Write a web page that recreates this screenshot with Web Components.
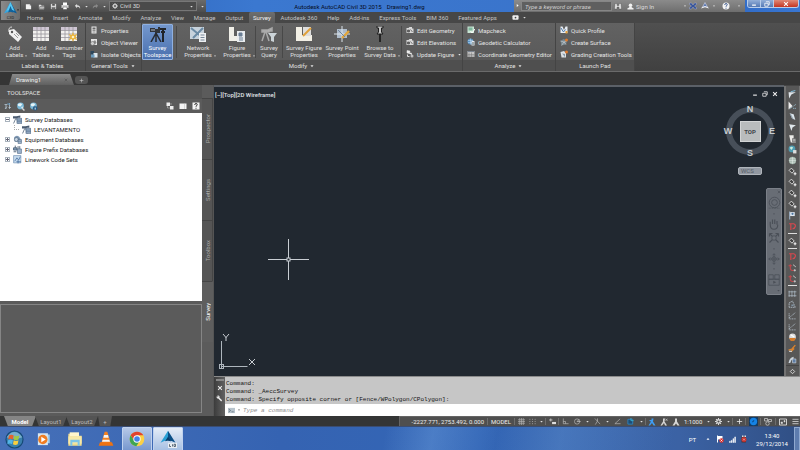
<!DOCTYPE html>
<html lang="en">
<head>
<meta charset="utf-8">
<title>Autodesk AutoCAD Civil 3D 2015</title>
<style>
html, body { margin: 0; min-height: 100%; background: #333435; }
body { font: 6px/7px Roboto, "Liberation Sans", sans-serif; color: #dcdcdc; overflow: hidden; }
</style>
</head>
<body>
<civil-app></civil-app>
<script>
/* Icon drawings, 16 x 16 unless listed in BOX24 */
const G = {
  caret: '<path d="M4 6h8l-4 5z" fill="currentColor"/>',
  gridTable: '<rect x="0" y="1" width="16" height="14" fill="#f2f1ee"/><path d="M0 1h16v3H0z" fill="#cfc6d4"/><path d="M4 1v14M8 1v14M12 1v14M0 4.5h16M0 8h16M0 11.5h16" stroke="#99979d" stroke-width=".8"/>',
};
const ICONS = {
  caret: G.caret,
  appA: '<path d="M8 0 0 14q4-2 8-2z" fill="#35a5e0"/><path d="M8 0l8 14q-4-2-8-2z" fill="#0c5f9d"/><path d="M8 0 3 11l5-2 5 2z" fill="#57c7f2"/><path d="M8 5 5 13l3-1 3 1z" fill="#13629a"/>',
  newf: '<path d="M2 3h9l3 3v8H2z" fill="#f2f2f2"/><path d="M11 3v3h3" fill="#999"/>',
  open: '<path d="M2 4h5l1 2h6v8H2z" fill="#e2e2e2"/><path d="M4 8h12l-3 6H2z" fill="#bbb" stroke="#444"/>',
  save: '<path d="M2 2h12v12H2z" fill="#d8d8d8"/><path d="M5 2h6v4H5zM4 9h8v5H4z" fill="#555"/><path d="M5 11h6" stroke="#fff"/>',
  print: '<path d="M4 1h8v5H4z" fill="#fff"/><path d="M1 6h14v6H1z" fill="#d2d2d2"/><path d="M4 10h8v5H4z" fill="#fff" stroke="#555"/>',
  undo: '<path d="M2 6l5-4v3q8 0 7 8-2-5-7-4v3z" fill="#ddd"/>',
  redo: '<path d="M14 6 9 2v3q-8 0-7 8 2-5 7-4v3z" fill="#8b8b8b"/>',
  gear: '<circle cx="8" cy="8" r="4" fill="none" stroke="#ddd" stroke-width="3"/><path d="M8 0v3M8 13v3M0 8h3M13 8h3M2.3 2.3l2 2M11.7 11.7l2 2M13.7 2.3l-2 2M4.3 11.7l-2 2" stroke="#ddd" stroke-width="2.4"/>',
  tag: '<path d="M2 6q-1-5 3-5" stroke="#ddd" fill="none"/><path d="M2 4l5-1 8 8-4 5-9-8z" fill="#eee"/><circle cx="5" cy="6" r="1.2" fill="#555"/><path d="M7 8l4 4M9 7l3 3" stroke="#999"/>',
  table: G.gridTable,
  renum: G.gridTable + '<path d="M12 6l1.200 3 3-1-1.500 3 1.500 3-3-1-1.200 3-1.200-3-3 1 1.500-3-1.500-3 3 1z" fill="#eab43c"/><circle cx="12" cy="11" r="1.300" fill="#fff3c2"/>',
  props: '<path d="M3 1h10v14H3z" fill="#e8e8e8"/><path d="M5 3h6v4H5z" fill="#666"/><path d="M5 9h6M5 12h6" stroke="#666" stroke-width="1.4"/>',
  viewer: '<path d="M2 2h12v12H2z" fill="#e6e6e6"/><path d="M5 9l5-5 3 5-3 4z" fill="#8a8a8a"/><circle cx="5" cy="11" r="4" fill="#cfcfcf" stroke="#555"/>',
  isolate: '<path d="M1 2h7v7H1z" fill="#2c475c"/><path d="M7 6h8v9H7z" fill="#dfe8ee"/><path d="M2 9h7v6H2z" fill="#6d9fc2"/>',
  transit: '<path d="M0 2h5v1h3V1h2v6H5V6H0z" fill="#30343a"/><path d="M6 7 1 16M6 7v9M6 7l5 9" stroke="#272b31" stroke-width="1.500"/><path d="M13 3v13M10 3h6M11 6h4" stroke="#20242a" stroke-width="2"/><path d="M1 4h4" stroke="#aeb7c7"/>',
  network: '<path d="M0 1h14v12H0z" fill="#c7d2dc"/><path d="M1 2l12 10M13 2 3 12" stroke="#6b8ba5" stroke-width="2"/><path d="M9 7h7v9H9z" fill="#eef0f2"/><path d="M10.500 9h4M10.500 11.500h4M10.500 14h4" stroke="#78889a"/>',
  figure: '<path d="M0 1h5v9h5v5H0z" fill="#f0efe8"/><path d="M8 5h8v11H8z" fill="#e9ecef"/><path d="M10 7h3v3h-3zM10 12h4M10 14h4" stroke="#6b7f95" fill="#6b7f95"/>',
  query: '<path d="M1 4h6l4-2v3H9l-1 1H1zM4 6 1 15M5 6l3 9" fill="#bbb" stroke="#a8a8a8" stroke-width="1.500"/><path d="M7 7h9l-3 4v5l-3-1v-4z" fill="#ccd4d8"/>',
  figprop: '<path d="M0 1h6v8h10v6H0z" fill="#f2efe5"/><path d="M7 1h8v9H7z" fill="#ddd"/><path d="M7 10l8-8" stroke="#e0a13a" stroke-width="2"/>',
  point: '<path d="M3 3h10v9H3z" fill="#aebccb"/><path d="M8 0v16M0 8h16" stroke="#dde5ec"/><path d="M8 12l7-7" stroke="#e4a73b" stroke-width="2.4"/><path d="M4 4l7 7" stroke="#71859c"/>',
  pin: '<path d="M5 0h6v2H9.500v4L11 8H5l1.500-2V2H5z" fill="#c4c4c4" stroke="#1f1f1f"/><path d="M8 8v8" stroke="#1d1d1d" stroke-width="1.800"/>',
  editgeo: '<path d="M1 4h4l2-2h5v3h3v9H1z" fill="#d9d9d9"/><path d="M3 8h4v4H3zM9 7l4 5" fill="#666" stroke="#555" stroke-width="1.500"/>',
  update: '<path d="M2 1l6 1-1 5-5-1zM6 6h5v4" fill="#eee" stroke="#eee"/><circle cx="12" cy="12" r="3" fill="#bbb"/><path d="M3 9v4h4" stroke="#ddd" fill="none" stroke-width="2"/>',
  mapcheck: '<path d="M1 1h13v13H1z" fill="#c9e5d4"/><path d="M3 3h8v6H3z" fill="#80b89e"/><path d="M7 10l3 4 6-8" stroke="#fff" stroke-width="2" fill="none"/>',
  geodetic: '<circle cx="7" cy="7" r="6" fill="#5b93c4"/><path d="M7 1v12M2 5h10M2 9h10" stroke="#cfe4f5"/><path d="M9 6h6v9H9z" fill="#e6eaf0"/><path d="M11 8v6M13 8v6" stroke="#566"/>',
  coord: '<path d="M1 2h14v12H1z" fill="#c6c6c6"/><path d="M1 3h14" stroke="#7b8490" stroke-width="2"/><path d="M4 5v9M1 9h14M1 12h14M9 5v9" stroke="#777"/>',
  qprofile: '<path d="M1 1h4l3 7 3-7h4v13H1z" fill="#e8edf3"/><path d="M2 4l5 8 4-5" stroke="#4d78a8" fill="none" stroke-width="2"/><path d="M11 10h4v5h-4z" fill="#e49e39"/>',
  surface: '<path d="M1 6l6-4 7 3-2 8-9 2z" fill="#7a8a92"/><path d="M1 6l7 2 6-3M8 8l-5 7M8 8l4 5" stroke="#e0e5e8"/><circle cx="13" cy="4" r="3" fill="#e07b2d"/>',
  grading: '<path d="M1 4l7-2 4 4v9H3z" fill="#dce1e5"/><path d="M4 7l6 1v6" fill="#8798a6"/><circle cx="13" cy="4" r="3" fill="#e07b2d"/>',
  bino: '<path d="M2 3h4v4h4V3h4l1 11h-5v-4H6v4H1z" fill="#e3e3e3" stroke="#444" stroke-width=".7"/>',
  user: '<circle cx="8" cy="5" r="4" fill="#f1f1f1"/><path d="M5 8h6v2l4 2v3H1v-3l4-2z" fill="#f1f1f1"/>',
  exch: '<path d="M1 2h4l3 4 3-4h4v3l-4 3 4 3v3h-4l-3-4-3 4H1v-3l4-3-4-3z" fill="#37549a" stroke="#dde" stroke-width=".6"/>',
  a360: '<path d="M8 1l5 9H3z" fill="#5a77ae" stroke="#eef"/><path d="M1 12q7-6 14 0" stroke="#fff" stroke-width="1.800" fill="none"/>',
  help: '<circle cx="8" cy="8" r="7" fill="#f3f3f3"/><path d="M5.500 6q0-3 2.500-3t2.500 2.300q0 1.700-2.500 3v1.200M8 11.500v2" fill="none" stroke="#35538a" stroke-width="1.800"/>',
  cam: '<rect x="1" y="3" width="14" height="10" rx="2" fill="#eee"/><circle cx="8" cy="8" r="2" fill="#444"/>',
  min: '<path d="M3 11h10" stroke="currentColor" stroke-width="3"/>',
  restore: '<path d="M5 2h9v8h-3M2 6h9v8H2z" fill="none" stroke="currentColor" stroke-width="2"/>',
  close: '<path d="M3 3l10 10M13 3 3 13" stroke="currentColor" stroke-width="2.800"/>',
  plus: '<path d="M8 2v12M2 8h12" stroke="currentColor" stroke-width="1.800"/>',
  ttool: '<path d="M1 5h6M4 5v9M6 9l-4 5M11 2v12M9 11h5" stroke="#b9cbd8" stroke-width="1.500"/><path d="M6 2l8 2-5 2z" fill="#5c8fb3"/>',
  globe: '<circle cx="8" cy="7" r="6" fill="#79b7d7"/><path d="M3 4q5-4 8 0l-3 4-4-1zM9 9l4-1-2 4z" fill="#e7f3f6"/><path d="M11 11l4 4" stroke="#d4d4d4" stroke-width="2.400"/>',
  globei: '<circle cx="8" cy="7" r="6" fill="#79b7d7"/><path d="M3 4q5-4 8 0l-3 4-4-1z" fill="#e7f3f6"/><circle cx="11" cy="11" r="4" fill="#265c86"/><path d="M11 8.500v1M11 10.500v3" stroke="#fff" stroke-width="1.500"/>',
  panes: '<path d="M1 1h7v7H1zM8 8h7v7H8z" fill="#eee"/><path d="M3 8v4h5M8 4h4" stroke="#ccc" fill="none"/>',
  pane: '<path d="M1 3h14v11H1z" fill="#f4f4f4"/><path d="M11 3v11" stroke="#bbb"/>',
  qbox: '<path d="M1 1h14v14H1z" fill="#f4f4f4"/><path d="M5.500 6q0-3 2.500-3t2.500 2.300q0 1.700-2.500 3v1.200M8 11.500v2" fill="none" stroke="#333" stroke-width="2"/>',
  sdb: '<path d="M0 2h6l7-1v4H9L6 6H0z" fill="#4a5b70"/><path d="M5 6 1 15M6 6l4 9" stroke="#5c6e83" stroke-width="1.500"/><path d="M7 6h9v9H7z" fill="#9cb3cd" stroke="#48617d"/><path d="M7 9h9M7 12h9" stroke="#48617d"/>',
  edb: '<path d="M2 4q4-5 9-1l2 3v6H3z" fill="#7d97b3"/><circle cx="6" cy="8" r="3.500" fill="#c7d5e3" stroke="#41566e"/><path d="M9 8h6v7H9z" fill="#a6bbd2" stroke="#47607c"/><path d="M9 11h6" stroke="#47607c"/>',
  fdb: '<path d="M1 5h6v4H1zM4 5V1M9 2v8M12 2v5M1 12h5" stroke="#41566e" stroke-width="1.500" fill="#8ca6c2"/><path d="M8 7h7v8H8z" fill="#9cb3cd" stroke="#47607c"/>',
  lcs: '<path d="M1 1h13v13H1z" fill="#c6dbee" stroke="#5e83a8"/><path d="M3 11l4-6 3 4 3-6M6 12h8M9 9v6" stroke="#41699b" fill="none" stroke-width="1.300"/>',
  wrench: '<path d="M2 2q4-2 6 1v3l6 6-2 3-7-7H3Q0 6 2 2l2 3 2-1z" fill="#eee"/>',
  prompt: '<path d="M0 2h16v12H0z" fill="#b8c4cd"/><path d="M2 5l4 3-4 3M8 11h5" stroke="#526170" fill="none" stroke-width="1.500"/>',
  gridl: '<path d="M4 0v16M8 0v16M12 0v16M0 4h16M0 8h16M0 12h16" stroke="#b9b9b9" stroke-width="1.400"/>',
  dots: '<path d="M1 3h14M1 8h14M1 13h14" stroke="#aaa" stroke-width="2" stroke-dasharray="2 4"/>',
  dyn: '<path d="M4 1v7M0 4.500h8" stroke="#ddd" stroke-width="1.600"/><path d="M7 9h9v5H7z" fill="#ddd"/>',
  ortho: '<path d="M3 1v12h12M3 8h5v5" stroke="#bbb" stroke-width="1.500" fill="none"/>',
  polar: '<circle cx="7" cy="8" r="6" fill="none" stroke="#bbb" stroke-width="1.500"/><path d="M7 8h8M7 8l5-5" stroke="#ccc" stroke-width="1.500"/>',
  iso: '<path d="M2 1l12 13M8 7 3 15M8 1v6" stroke="#bbb" stroke-width="1.500"/>',
  angle: '<path d="M14 2 2 13h13" stroke="#bbb" stroke-width="1.500" fill="none"/>',
  osnap: '<path d="M2 3h11v11H2z" fill="#1d4d74" stroke="#2d84c4" stroke-width="2"/><path d="M9 0v6h6" stroke="#39b4d3" fill="none" stroke-width="2"/>',
  annb: '<path d="M7 1h4l-1 6 5 8h-4l-3-5-4 5H1l5-8-3-1V4h4z" fill="#3f9df2"/>',
  anng: '<path d="M6 1h4l-1 6 5 8h-4l-2-5-4 5H1l5-8z" fill="#d6d6d6"/><path d="M11 2l4 3M11 5l4-3" stroke="#ccc" stroke-width="1.400"/>',
  ann: '<path d="M6 1h4v6l5 8h-4l-3-4-3 4H1l5-8z" fill="#d6d6d6"/>',
  blue: '<path d="M0 0h16v16H0z" fill="#123a63"/><circle cx="8" cy="8" r="6.500" fill="#1583e6"/><path d="M6 9l3-3" stroke="#0b4b8c" stroke-width="2"/>',
  iso2: '<path d="M1 1h6v5H1zM9 3h6v4H9z" fill="none" stroke="#ccc" stroke-width="1.500"/><circle cx="7" cy="11" r="3.500" fill="none" stroke="#ccc" stroke-width="1.500"/>',
  clean: '<path d="M1 2h14v12H1z" fill="none" stroke="#ddd" stroke-width="1.800"/><path d="M10 5h2v3h-2zM4 8h3v3H4z" fill="#ddd" stroke="#ddd"/>',
  menu: '<path d="M1 3h14M1 8h14M1 13h14" stroke="#ddd" stroke-width="1.800"/>',
  /* right-hand tool strip */
  r1: '<path d="M1 4h13l-8 4-4 7z" fill="#dfe6eb"/><path d="M5 3l8-2" stroke="#7cb4d0" stroke-width="2"/>',
  r2: '<path d="M1 1l7 8-7 6z" fill="#eee"/><path d="M3 14l11-8M9 13h6" stroke="#9dc3d4" stroke-width="1.500" stroke-dasharray="2 1"/>',
  r3: '<path d="M3 2l7 2 3 10-6-3z" fill="#dce5eb"/><path d="M4 3l5 10" stroke="#8296a4" stroke-width="1.500"/>',
  r4: '<path d="M2 2l4 12 2-6 6-4z" fill="#e1e8ec"/>',
  r5: '<path d="M2 2h8v7l4 3v3H5z" fill="#ecebe8"/><path d="M8 8h6v6H8z" fill="#a9a9a9" stroke="#555"/>',
  r6: '<circle cx="7" cy="7" r="6" fill="#4f9db2"/><path d="M3 5q4-4 6 0l-3 4z" fill="#ccecdf"/><path d="M9 9h6v6H9z" fill="#ddd"/>',
  r7: '<circle cx="8" cy="8" r="6.500" fill="#a1b5ab"/><path d="M8 2v12M2 8h12M3 5h10M3 11h10" stroke="#e5ece8"/>',
  r8: '<path d="M6 2l5 5-4 4-5-5z" fill="#444" stroke="#e4e4e4" stroke-width="1.600"/><path d="M10 12h5M12.500 9.500v5" stroke="#f2f2f2" stroke-width="2"/>',
  r9: '<path d="M3 2h9v7H3z" fill="#dfe7ef"/><path d="M3 1v14" stroke="#97abc0" stroke-width="2"/><circle cx="8" cy="5" r="2" fill="#4d76a1"/>',
  r10: '<path d="M2 3h8q4 1 3 5t-5 4M5 3v11" stroke="#d9484f" stroke-width="2" fill="none"/>',
  r11: '<path d="M4 2v7M1 5h6M4 9q0 5 6 4" stroke="#c8474c" stroke-width="1.800" fill="none"/><path d="M9 3l5 4M12 11v4M10 13h4" stroke="#ccc" stroke-width="1.600"/>',
  r12: '<path d="M2 3v11M7 3v11M12 3v11M1 5h14M1 12h14" stroke="#b6c3cf" stroke-width="1.200"/>',
  r13: '<path d="M2 13V5l6-3 5 11z" fill="none" stroke="#b6c3cf" stroke-width="1.400" stroke-dasharray="3 1"/><path d="M6 8h4v3H6z" fill="#8295a5"/>',
  r14: '<path d="M2 12 13 3M2 4v10h12" fill="none" stroke="#b6c3cf" stroke-width="1.400" stroke-dasharray="2 1"/>',
  r15: '<circle cx="8" cy="7" r="6" fill="#dcdcdc"/><path d="M2 9h12l-3 5H5z" fill="#d47b2a"/><path d="M5 3l6 4" stroke="#fff" stroke-width="2"/>',
  r16: '<path d="M1 11l6-2 6-7M5 14l6-6" stroke="#d9822e" stroke-width="2.400"/><path d="M2 13h5" stroke="#ddd" stroke-width="2"/>',
  r17: '<path d="M1 14q1-9 9-11v3Q5 8 4 14z" fill="#c9d2da"/><path d="M8 7h6v7H8z" fill="#5e7da5" stroke="#d7dfe8"/>',
  diamond: '<path d="M8 3l5 5-5 5-5-5z" fill="none" stroke="#ddd" stroke-width="2"/>',
  /* navigation bar */
  wheel: '<circle cx="8" cy="8" r="6.500" fill="none" stroke="currentColor"/><circle cx="8" cy="8" r="3.500" fill="none" stroke="currentColor"/><path d="M1 15h14" stroke="currentColor" stroke-dasharray="1 1"/>',
  hand: '<path d="M3 9V5M6 8V2M9 8V2M12 9V4M3 9q0 6 5 6t5-6" stroke="currentColor" stroke-width="1.500" fill="none"/>',
  zoomx: '<path d="M2 2l12 12M14 2 2 14M2 2h4M2 2v4M14 2h-4M14 2v4" stroke="currentColor" stroke-width="1.500"/><circle cx="8" cy="8" r="3" fill="#6b7078" stroke="currentColor"/>',
  orbit: '<path d="M8 1v14M1 8h14M6 3l2-2 2 2M6 13l2 2 2-2M3 6 1 8l2 2M13 6l2 2-2 2" stroke="currentColor" fill="none"/><circle cx="8" cy="8" r="3" fill="none" stroke="currentColor"/>',
  motion: '<path d="M1 7h14v8H1zM1 1h6v6H1zM9 1h6v6H9z" fill="none" stroke="currentColor"/><path d="M7 9l4 2-4 2z" fill="currentColor"/>',
  /* task bar */
  win: '<circle cx="12" cy="12" r="11.500" fill="#164976"/><circle cx="12" cy="12" r="10" fill="#3a80ad"/><path d="M2 9q10-13 20 0-10 4-20 0z" fill="#a4cfe0" opacity=".6"/><path d="M5 7q3-2 6 0l-1 5q-3-2-6 0z" fill="#e5622c"/><path d="M12 7q3 2 6 0l-1 5q-3 2-6 0z" fill="#9fca43"/><path d="M4 13q3-2 6 0l-1 5q-3-2-6 0z" fill="#52b5e8"/><path d="M11 13q3 2 6 0l-1 5q-3 2-6 0z" fill="#f9cf3f"/>',
  wmp: '<path d="M8 4h14v14H8z" fill="#9dcdec"/><path d="M3 2h16v19H3z" fill="#d6e6f2"/><circle cx="11" cy="12" r="7.500" fill="#ef7d22"/><path d="M8.500 7.500l7 4.500-7 4.500z" fill="#fff"/>',
  folder: '<path d="M2 4h8l2 3h10v15H2z" fill="#f0dc8c"/><path d="M4 2h14v6H4z" fill="#fff6cd"/><path d="M2 8h20v11H2z" fill="#f7e9a8"/><path d="M5 13h14v9h-3v-5H8v5H5z" fill="#7dc5e8"/>',
  vlc: '<path d="M10 1h4l5 17H5z" fill="#f58220"/><path d="M9 6h6l1 4H8zM7 13h10l1 3H6z" fill="#f4f4f4"/><path d="M3 17h18l2 5H1z" fill="#ee7212"/>',
  chrome: '<circle cx="12" cy="12" r="11" fill="#fbd045"/><path d="M12 1a11 11 0 0 1 9.500 5.500H12L7 14 2.500 6.500A11 11 0 0 1 12 1z" fill="#e0412f"/><path d="M2.500 6.500A11 11 0 0 0 11 23l5-8-4 2-5-3z" fill="#3fa552"/><circle cx="12" cy="12" r="5.500" fill="#fff"/><circle cx="12" cy="12" r="4.200" fill="#4482e8"/>',
  acad: '<path d="M12 1 2 17q5-3 10-3z" fill="#2ba0d4"/><path d="M12 1l10 16q-5-3-10-3z" fill="#0a4e85"/><path d="M12 9l-4 6 4-1 4 1z" fill="#0b3e6b"/><path d="M12 17h12v7H12z" fill="#e8edf2"/><path d="M14 19v3h2M18 19v3M20 19h2v3h-2z" stroke="#345" fill="none"/>',
  flag: '<path d="M3 1v14" stroke="#fff" stroke-width="2"/><path d="M4 2h9v7H4z" fill="#fff"/><circle cx="11" cy="11" r="4.500" fill="#d9302c"/><path d="M9 9l4 4M13 9l-4 4" stroke="#fff" stroke-width="1.500"/>',
  signal: '<path d="M1 15v-3h2v3zM5 15v-5h2v5zM9 15V6h2v9zM13 15V2h2v13z" fill="#fff" stroke="#fff"/>',
  sound: '<path d="M3 3h9v12H3z" fill="#4a3434"/><path d="M4 1h3v3H4zM9 1h3v3H9z" fill="#ddd"/><circle cx="8" cy="9" r="5" fill="#c8302c"/><path d="M6 7l4 4M10 7l-4 4" stroke="#eee"/>',
  up: '<path d="M4 10h8L8 5z" fill="#fff"/>',
};
const BOX24 = new Set(['win', 'wmp', 'folder', 'vlc', 'chrome', 'acad']);

const RESET = `
  *, *::before { box-sizing: border-box; }
  button, input, select { font: inherit; color: inherit; margin: 0; padding: 0; border: 0; background: none;
    border-radius: 0; outline: 0; appearance: none; min-width: 0; text-align: inherit; }
  button { display: flex; align-items: center; justify-content: center; white-space: nowrap; }
`;
function define(tag, render) {
  customElements.define(tag, class extends HTMLElement {
    connectedCallback() {
      if (this.shadowRoot) return;
      const t = document.createElement('template');
      t.innerHTML = render(this);
      const root = this.attachShadow({ mode: 'open' });
      root.append(t.content.cloneNode(true));
      const s = document.createElement('style');
      s.textContent = RESET;
      root.prepend(s);
    }
  });
}
const ic = (n, s = 8) => `<cad-icon name="${n}" size="${s}"></cad-icon>`;

define('cad-icon', el => {
  const n = el.getAttribute('name'), s = el.getAttribute('size') || 8, b = BOX24.has(n) ? 24 : 16;
  return `<style>:host{display:block;flex:none}svg{display:block}</style>
    <svg width="${s}" height="${s}" viewBox="0 0 ${b} ${b}" fill="none" aria-hidden="true">${ICONS[n] || ''}</svg>`;
});

define('icon-button', el => `
  <style>:host{display:flex;flex:none}button{width:100%;height:100%}</style>
  <button aria-label="${el.getAttribute('label') || el.getAttribute('name')}">${ic(el.getAttribute('name'), el.getAttribute('size') || 8)}</button>`);

define('app-button', () => `
  <style>:host{display:block;height:21px;width:21px}
  button{width:100%;height:100%;flex-direction:column;background:linear-gradient(90deg,#8a8a8a,#6c6c6c);border:1px solid #474747;border-radius:0 0 3px 0;position:relative}
  cad-icon[name=caret]{position:absolute;right:0;top:7px;color:#111}
  span{font-size:4px;line-height:5px;color:#222}</style>
  <button aria-label="Application menu">${ic('appA', 13)}<span>C3D</span>${ic('caret', 4)}</button>`);

define('title-bar', () => `
  <style>
  :host{display:flex;height:12px;background:linear-gradient(90deg,#2a5fb4,#3b78d0 30%,#3a74cb 70%,#2a62bd 85%,#3977d3)}
  .quick{display:flex;align-items:center;flex:none;width:185px;background:linear-gradient(#6b6b6b,#4d4d4d)}
  .quick icon-button{width:12px;height:12px}
  .quick .f{width:14px}
  .quick .c{width:6px;color:#ddd}
  .ws{display:flex;align-items:center;gap:2px;width:89px;height:10px;margin-left:2px;padding:0 2px;background:#4a4a4a;border:1px solid #777}
  select{flex:1;line-height:8px;height:8px}
  .quick .cap{width:8px;margin-left:1px}
  .name{flex:1;display:flex;justify-content:center;align-items:center;color:#050c1c;gap:5px;padding-right:1px}
  .info{display:flex;align-items:center;width:231px;flex:none;background:linear-gradient(#8b8b8b,#6e6e6e)}
  .info .a{width:7px;height:12px;color:#fff;transform:rotate(-90deg)}
  input{width:91px;height:10px;padding-left:3px;background:#5f5f5f;border:1px solid #868686;font-style:italic}
  input::placeholder{color:#cfcfcf;opacity:1}
  .info icon-button{width:12px;height:12px;color:#eee}
  .info .n{width:5px}
  .info .h{width:20px}
  .sign{width:46px;justify-content:flex-start}
  .win{display:flex;flex:none;width:52px;height:8px;margin:0 1px 0 2px;color:#fff;border:1px solid #b8cdea;border-top:0;border-radius:0 0 3px 3px;overflow:hidden}
  .win icon-button{flex:1;background:linear-gradient(#93afd8,#5479b5);border-right:1px solid #b8cdea}
  .win icon-button:last-child{flex:2;background:linear-gradient(#e08a78,#c43521);border:0}
  </style>
  <div class="quick">
    <icon-button class="f" name="newf" size="7"></icon-button><icon-button name="open" size="7"></icon-button>
    <icon-button name="save" size="7"></icon-button><icon-button name="print" size="8"></icon-button>
    <icon-button name="undo" size="7"></icon-button><icon-button class="c" name="caret" size="5" label="Undo list"></icon-button>
    <icon-button name="redo" size="7"></icon-button><icon-button class="c" name="caret" size="5" label="Redo list"></icon-button>
    <label class="ws">${ic('gear', 6)}<select aria-label="Workspace"><option>Civil 3D</option></select>${ic('caret', 5)}</label>
    <icon-button name="caret" size="5" class="cap" label="Customize"></icon-button>
  </div>
  <div class="name"><span>Autodesk AutoCAD Civil 3D 2015</span><span>Drawing1.dwg</span></div>
  <div class="info">
    <icon-button class="a" name="caret" size="6" label="Collapse search"></icon-button>
    <input type="search" aria-label="Search" placeholder="Type a keyword or phrase">
    <icon-button name="bino"></icon-button><icon-button name="user" size="7"></icon-button>
    <button class="sign">Sign In</button>
    <icon-button class="n" name="caret" size="4" label="Account"></icon-button><icon-button name="exch"></icon-button>
    <icon-button name="a360"></icon-button><icon-button class="n" name="caret" size="4" label="Apps"></icon-button>
    <icon-button class="h" name="help"></icon-button><icon-button class="n" name="caret" size="4" label="Help menu"></icon-button>
  </div>
  <div class="win"><icon-button name="min" size="6"></icon-button><icon-button name="restore" size="6"></icon-button><icon-button name="close" size="6"></icon-button></div>`);

define('ribbon-tabs', el => `
  <style>:host{display:flex;align-items:stretch;height:11px;background:#474747;color:#c4c4c4;padding-left:2px}
  nav{display:flex;justify-content:space-between;flex:0 0 478px}
  button{padding:0 4px}
  button[aria-selected=true]{background:linear-gradient(#6e6e6e,#5c5c5c);color:#f2f2f2;border-radius:2px 2px 0 0}
  icon-button{width:12px;margin-left:8px}.c{width:6px;margin:0;color:#ddd}</style>
  <nav role="tablist">${el.getAttribute('tabs').split(',').map(t => `<button role="tab" aria-selected="${t === 'Survey'}">${t}</button>`).join('')}</nav>
  <icon-button name="cam" size="7" label="Minimize ribbon"></icon-button><icon-button class="c" name="caret" size="5" label="Ribbon options"></icon-button>`);

define('ribbon-panel', el => `
  <style>:host{display:flex;flex-direction:column;flex:none;width:var(--w);border-right:1px solid #444}
  .body{flex:1;display:flex;background:linear-gradient(#626262,#5a5a5a);padding-top:1px}
  .cap{display:flex;align-items:center;justify-content:center;gap:2px;height:11px;width:100%;background:#4f4f4f;color:#e2e2e2}</style>
  <div class="body"><slot></slot></div>
  ${el.hasAttribute('menu') ? `<button class="cap">${el.getAttribute('caption')}${ic('caret', 6)}</button>` : `<div class="cap">${el.getAttribute('caption')}</div>`}`);

define('big-tool', el => `
  <style>:host{display:flex;flex:none;width:var(--w);height:36px}
  button{width:100%;flex-direction:column;justify-content:flex-start;padding-top:2px;gap:2px;color:#e0e0e0;text-align:center}
  :host([active]) button{background:linear-gradient(#7397cd,#4a70ae);border:1px solid #8fb0e0;padding-top:1px;border-radius:1px;color:#fff}
  span{position:relative;line-height:7px}
  span cad-icon{position:absolute;left:100%;bottom:0;margin-left:1px}</style>
  <button>${ic(el.getAttribute('icon'), 16)}<span>${el.getAttribute('text').replace('|', '<br>')}${el.hasAttribute('menu') ? ic('caret', 4) : ''}</span></button>`);

define('tool-list', el => `
  <style>:host{display:flex;flex-direction:column;flex:none;padding-left:4px}
  button{height:12px;gap:3px;justify-content:flex-start;color:#e4e4e4}</style>
  ${el.getAttribute('items').split(',').map(i => { const [n, t, m] = i.split(':'); return `<button>${ic(n, 8)}${t}${m ? ic('caret', 5) : ''}</button>`; }).join('')}`);

define('ribbon-bar', () => `
  <style>:host{display:flex;height:49px;background:linear-gradient(#505050,#404040);border-bottom:1px solid #6a6a6a}
  i{width:1px;flex:none;background:#484848;margin:2px 0}
  .r{margin-left:3px}</style>
  <ribbon-panel style="--w:86px" caption="Labels &amp; Tables">
    <big-tool style="--w:29px" icon="tag" text="Add|Labels" menu></big-tool><big-tool style="--w:24px" icon="table" text="Add|Tables" menu></big-tool><big-tool style="--w:32px" icon="renum" text="Renumber|Tags"></big-tool>
  </ribbon-panel>
  <ribbon-panel style="--w:56px" caption="General Tools" menu><tool-list items="props:Properties,viewer:Object Viewer,isolate:Isolate Objects"></tool-list></ribbon-panel>
  <ribbon-panel style="--w:321px" caption="Modify" menu>
    <big-tool style="--w:31px" icon="transit" text="Survey|Toolspace" active></big-tool><i class="r"></i>
    <big-tool style="--w:42px" icon="network" text="Network|Properties" menu></big-tool><big-tool style="--w:36px" icon="figure" text="Figure|Properties" menu></big-tool><i></i>
    <big-tool style="--w:26px" icon="query" text="Survey|Query"></big-tool><i></i>
    <big-tool style="--w:42px" icon="figprop" text="Survey Figure|Properties"></big-tool><big-tool style="--w:34px" icon="point" text="Survey Point|Properties"></big-tool><big-tool style="--w:42px" icon="pin" text="Browse to|Survey Data" menu></big-tool><i></i>
    <tool-list items="editgeo:Edit Geometry,editgeo:Edit Elevations,update:Update Figure:m"></tool-list>
  </ribbon-panel>
  <ribbon-panel style="--w:93px" caption="Analyze" menu><tool-list items="mapcheck:Mapcheck,geodetic:Geodetic Calculator,coord:Coordinate Geometry Editor"></tool-list></ribbon-panel>
  <ribbon-panel style="--w:79px" caption="Launch Pad"><tool-list items="qprofile:Quick Profile,surface:Create Surface,grading:Grading Creation Tools"></tool-list></ribbon-panel>`);

define('file-tabs', () => `
  <style>:host{display:flex;height:13px;background:#353535;padding:2px 0 0 9px}
  .t{display:flex;align-items:center;width:65px;background:linear-gradient(#8a8a8a,#606060);clip-path:polygon(5% 0,94% 0,100% 100%,0 100%);color:#eee}
  .t button:first-child{flex:1;justify-content:flex-start;padding-left:7px}
  .t icon-button{width:12px;color:#555;margin-right:2px}
  .add{width:13px;height:8px;margin:2px 0 0 1px;background:#555;color:#ccc;border-radius:3px}</style>
  <div class="t"><button>Drawing1</button><icon-button name="close" size="4"></icon-button></div><icon-button class="add" name="plus" size="5"></icon-button>`);

define('tree-item', el => `
  <style>:host{display:flex;align-items:center;height:10px;gap:3px;color:#1a1a1a;padding-left:calc(5px + var(--in,0px))}
  b{width:5px;height:5px;border:1px solid #a9b3bd;background:linear-gradient(#667,#667) center/3px 1px no-repeat;flex:none}
  .v{background:linear-gradient(#667,#667) center/3px 1px no-repeat,linear-gradient(#667,#667) center/1px 3px no-repeat}
  .leaf{border:0;border-left:1px dotted #aaa;border-bottom:1px dotted #aaa;background:none;margin-bottom:4px}</style>
  <b class="${el.getAttribute('kind') || ''}"></b>${ic(el.getAttribute('icon'), 9)}<span><slot></slot></span>`);

define('tool-space', () => `
  <style>:host{display:grid;grid-template-columns:minmax(0,1fr) 11px;background:#5b5b5b;border-right:1px solid #555}
  .main{display:flex;flex-direction:column}
  h2{margin:0;font:inherit;padding:4px 7px 2px;height:14px;line-height:8px;color:#e2e2e2;background:#535353}
  .bar{display:flex;height:14px;align-items:center;padding:0 0 0 1px}
  .bar icon-button{width:13px;height:10px}.sp{flex:1}
  .tree{flex:1 1 187px;background:#fff;padding-top:1px}
  .low{flex:1 1 109px;margin:3px 0 3px;border:1px solid #858585}
  .side{display:flex;flex-direction:column;padding:13px 0 0}
  .side button{height:61px;writing-mode:vertical-rl;color:#ababab;background:#555;border:1px solid #454545;border-left:0;border-bottom:0}
  .side span{transform:rotate(180deg)}
  .side button[aria-selected=true]{background:#5e5e5e;color:#fff;border-right-color:#5e5e5e}
  </style>
  <div class="main"><h2>TOOLSPACE</h2>
  <div class="bar"><icon-button name="ttool"></icon-button><icon-button name="globe" size="9"></icon-button><icon-button name="globei" size="9"></icon-button><span class="sp"></span>
  <icon-button name="panes"></icon-button><icon-button name="pane"></icon-button><icon-button name="qbox"></icon-button></div>
  <div class="tree">
    <tree-item icon="sdb">Survey Databases</tree-item>
    <tree-item icon="sdb" kind="leaf" style="--in:9px">LEVANTAMENTO</tree-item>
    <tree-item icon="edb" kind="v">Equipment Databases</tree-item>
    <tree-item icon="fdb" kind="v">Figure Prefix Databases</tree-item>
    <tree-item icon="lcs" kind="v">Linework Code Sets</tree-item>
  </div><div class="low"></div></div>
  <div class="side" role="tablist"><button role="tab"><span>Prospector</span></button><button role="tab"><span>Settings</span></button><button role="tab"><span>Toolbox</span></button><button role="tab" aria-selected="true"><span>Survey</span></button></div>`);

define('view-cube', () => `
  <style>:host{display:block;width:54px;color:#c9cdd0;font:bold 9px/10px "Liberation Sans",sans-serif}
  .c{display:grid;grid-template:10px 34px 10px / 10px 34px 10px;place-items:center;position:relative}
  .c::before{content:"";position:absolute;inset:3px;border:6px solid #474f59;border-radius:50%}
  .c>*{position:relative}
  .n,.s{grid-column:2}.w{grid-column:1;grid-row:2}.e{grid-column:3;grid-row:2}.n{grid-row:1}.s{grid-row:3}
  button.t{grid-column:2;grid-row:2;width:21px;height:21px;background:#b9bcbd;border:1px solid #d3d5d6;color:#3c4248;font:bold 6px/7px Roboto,sans-serif}
  .wcs{margin:9px auto 0;width:24px;height:8px;background:#9298a1;border:1px solid #b0b5bb;border-radius:2px;color:#555c66;font:6px/6px Roboto,sans-serif;justify-content:flex-start;padding-left:2px}</style>
  <div class="c"><span class="n">N</span><span class="w">W</span><button class="t">TOP</button><span class="e">E</span><span class="s">S</span></div><button class="wcs">WCS</button>`);

define('nav-bar', () => `
  <style>:host{display:flex;flex-direction:column;align-items:center;justify-content:space-between;box-sizing:border-box;width:16px;height:107px;background:#686d75;border:1px solid #7b8088;border-radius:2px;color:#4a4f57;padding:1px 0}
  .x{align-self:flex-end}</style>
  <icon-button class="x" name="close" size="4"></icon-button><icon-button name="wheel" size="13"></icon-button><icon-button name="caret" size="4"></icon-button><icon-button name="hand" size="12"></icon-button><icon-button name="zoomx" size="12"></icon-button><icon-button name="caret" size="4" label="Zoom"></icon-button><icon-button name="orbit" size="12"></icon-button><icon-button name="caret" size="4" label="Orbit"></icon-button><icon-button name="motion" size="12"></icon-button><icon-button class="x" name="caret" size="5" label="Options"></icon-button>`);

define('drawing-canvas', () => `
  <style>:host{display:block;position:relative;background:#212830;border-top:2px solid #5b6067;color:#e0e4e8}
  .vp{display:flex;margin:4px 0 0 1px;font-weight:500}
  .wc{position:absolute;top:4px;right:6px;display:flex;gap:4px;color:#eee}
  view-cube{position:absolute;top:17px;right:7px}
  nav-bar{position:absolute;top:101px;right:2px}
  svg{position:absolute;display:block}
  .cross{left:54px;top:152px}.ucs{left:4px;bottom:3px}</style>
  <div class="vp"><button>[–]</button><button>[Top]</button><button>[2D Wireframe]</button></div>
  <div class="wc"><icon-button name="min" size="6"></icon-button><icon-button name="restore" size="6"></icon-button><icon-button name="close" size="6"></icon-button></div>
  <view-cube></view-cube><nav-bar></nav-bar>
  <svg class="cross" width="42" height="42" viewBox="0 0 42 42" fill="none" stroke="#c9ced3"><path d="M0 20.500h19M22 20.500h19M20.500 0v19M20.500 22v19"/><rect x="19" y="19" width="3" height="3"/></svg>
  <svg class="ucs" width="40" height="40" viewBox="0 0 40 40" fill="none" stroke="#aeb6bd"><path d="M3.500 8v28M3.500 33.500h26"/><rect x="1.500" y="31.500" width="4" height="4"/><path d="M5 1l3 3.500L11 1M8 4v4M31 26l6 6M37 26l-6 6" stroke="#c9ced3"/></svg>`);

define('tool-strip', el => `
  <style>:host{display:flex;flex-direction:column;align-items:stretch;background:#575757;border-left:2px solid #727272;border-right:1px solid #727272;margin-top:1px;padding-top:3px;overflow:hidden}
  icon-button{height:11px}i{height:1px;margin:1px 2px 2px;background:#ddd}.end{margin-top:auto;border-top:1px solid #444}</style>
  ${'r1,r2,r3,r4,r5,r6,r7,r8,r8,r8,r8,r9,r10,-,r8,-,r10,r11,r11,-,r12,r13,r14,r14,r15,r16,r17'.split(',').map(n => n === '-' ? '<i></i>' : `<icon-button name="${n}" size="9"></icon-button>`).join('')}
  <icon-button class="end" name="diamond" size="7"></icon-button>`);

define('command-line', () => `
  <style>:host{display:grid;grid-template-columns:11px minmax(0,1fr);background:#c6c6c6;border-top:1px solid #8b8b8b;color:#141414;font:6px/7px "Liberation Mono",monospace}
  .g{display:flex;flex-direction:column;align-items:center;gap:4px;background:linear-gradient(90deg,#3c3c3c,#626262);color:#eee}
  .g::before{content:"";width:8px;height:2px;margin-top:2px;border:1px solid #888;border-width:1px 0}
  .h{display:grid;gap:1px;padding:3px 1px 1px}.h div{white-space:pre}
  .in{display:flex;align-items:center;height:12px;background:#fff;gap:2px;padding-left:3px;color:#555}
  input{flex:1;height:10px;font-style:italic}input::placeholder{color:#8e8e8e;opacity:1}</style>
  <div class="g"><icon-button name="close" size="6"></icon-button><icon-button name="wrench" size="7"></icon-button></div>
  <div><div class="h"><div>Command:</div><div>Command: _AeccSurvey</div><div>Command: Specify opposite corner or [Fence/WPolygon/CPolygon]:</div></div>
  <div class="in">${ic('prompt', 7)}${ic('caret', 4)}<input aria-label="Command" placeholder="Type a command"></div></div>`);

define('status-bar', () => {
  const b = (n, w = 12, s = 7) => `<icon-button name="${n}" size="${s}" class="w${w}"></icon-button>`;
  const c = '<icon-button name="caret" size="5" class="w8" label="Options"></icon-button>';
  return `
  <style>:host{display:flex;justify-content:space-between;align-items:stretch;height:10px;background:#343535}
  .l{display:flex;padding-left:4px}
  .l button{width:32px;margin-right:-1px;background:#545454;color:#bbb;clip-path:polygon(0 0,100% 0,88% 100%,12% 100%)}
  .l button:last-child{width:14px;margin-left:1px}
  .l button[aria-selected=true]{background:#858585;color:#fff;font-weight:bold}
  .r{display:flex;align-items:stretch;background:#4f4f4f;border-top:1px solid #656565;border-left:1px solid #656565;color:#ececec}
  .r button{padding:0 3px}.r .xyz{padding:0 3px 0 12px}
  .w8{width:8px;color:#ddd}.w10{width:10px}.w12{width:12px}.w14{width:14px}
  i{width:1px;background:#6e6e6e;margin:1px 0}
  label{display:flex;align-items:center;padding-left:2px}select{width:20px;line-height:8px;height:8px}</style>
  <div class="l" role="tablist"><button role="tab" aria-selected="true">Model</button><button role="tab">Layout1</button><button role="tab">Layout2</button><button aria-label="New layout">+</button></div>
  <div class="r"><button class="xyz">-2227.771, 2753.492, 0.000</button><i></i><button>MODEL</button><i></i>
  ${b('gridl')}${b('dots', 10)}${c}<i></i>${b('dyn')}<i></i>${b('ortho')}${b('polar', 12)}${c}${b('iso', 12)}${c}${b('angle', 12)}${b('osnap', 14)}${c}<i></i>
  ${b('annb', 12, 8)}${b('anng', 12, 8)}${b('ann', 12, 8)}<label><select aria-label="Annotation scale"><option>1:1000</option></select></label>${c}
  ${b('gear', 12)}${c}<i></i>${b('plus', 12)}<i></i>${b('blue', 14, 9)}<i></i>${b('iso2', 14, 8)}<i></i>${b('clean', 14, 8)}${b('menu', 10)}</div>`;
});

define('task-bar', () => `
  <style>:host{display:flex;box-sizing:border-box;align-items:center;height:25px;color:#fff;
    background:linear-gradient(100deg,transparent 48%,rgba(120,170,230,.35) 54%,transparent 62%,rgba(110,160,220,.3) 70%,transparent 84%),linear-gradient(90deg,#4670b8,#3563b2 35%,#3366b6 60%,#3b62a4 85%,#304f84);border-top:1px solid #3a4d73}
  .i{width:31px;height:24px}.run{border:1px solid #c0d2ee;background:linear-gradient(#b5c8e7,#7898cf);border-radius:1px;width:30px;margin-left:1px}
  .st{width:28px}.sp{flex:1}.on{background:linear-gradient(#e4ecf7,#a7c0e3)}
  .s{width:12px;height:12px}.pt{margin-right:6px}
  .clock{flex-direction:column;line-height:8px;margin:6px 6px 4px}
  .desk{width:6px;height:24px;background:#5d7cae;border:1px solid #8fa9d0}</style>
  <icon-button class="st" name="win" size="19" label="Start"></icon-button><icon-button class="i" name="wmp" size="15"></icon-button><icon-button class="i" name="folder" size="16"></icon-button><icon-button class="i" name="vlc" size="16"></icon-button>
  <icon-button class="i run" name="chrome" size="16"></icon-button><icon-button class="i run on" name="acad" size="18"></icon-button><span class="sp"></span>
  <button class="pt">PT</button><icon-button class="s" name="up" size="6"></icon-button><icon-button class="s" name="flag" size="8"></icon-button><icon-button class="s" name="signal" size="7"></icon-button><icon-button class="s" name="sound" size="8"></icon-button>
  <button class="clock"><span>13:40</span><span>29/12/2014</span></button><icon-button class="desk" name="" label="Show desktop"></icon-button>`);

define('civil-app', () => `
  <style>
  :host{display:grid;min-height:100vh;grid-template-columns:21px minmax(0,1fr);grid-template-rows:12px 11px 49px 13px minmax(0,1fr) auto auto}
  app-button{grid-row:1/3;grid-column:1;position:relative;z-index:1}
  .back{grid-row:1/3;grid-column:1;background:#474747}
  ribbon-bar,file-tabs,.work,status-bar,task-bar{grid-column:1/3}
  .work{display:grid;grid-template-columns:214px minmax(0,1fr) 16px;grid-template-rows:minmax(0,1fr) auto;background:#454545}
  tool-space{grid-row:1/3}command-line{grid-column:2/4}
  </style>
  <div class="back"></div><app-button></app-button><title-bar></title-bar>
  <ribbon-tabs tabs="Home,Insert,Annotate,Modify,Analyze,View,Manage,Output,Survey,Autodesk 360,Help,Add-ins,Express Tools,BIM 360,Featured Apps"></ribbon-tabs>
  <ribbon-bar></ribbon-bar><file-tabs></file-tabs>
  <div class="work"><tool-space></tool-space><drawing-canvas></drawing-canvas><tool-strip></tool-strip><command-line></command-line></div>
  <status-bar></status-bar><task-bar></task-bar>`);
</script>
</body>
</html>
